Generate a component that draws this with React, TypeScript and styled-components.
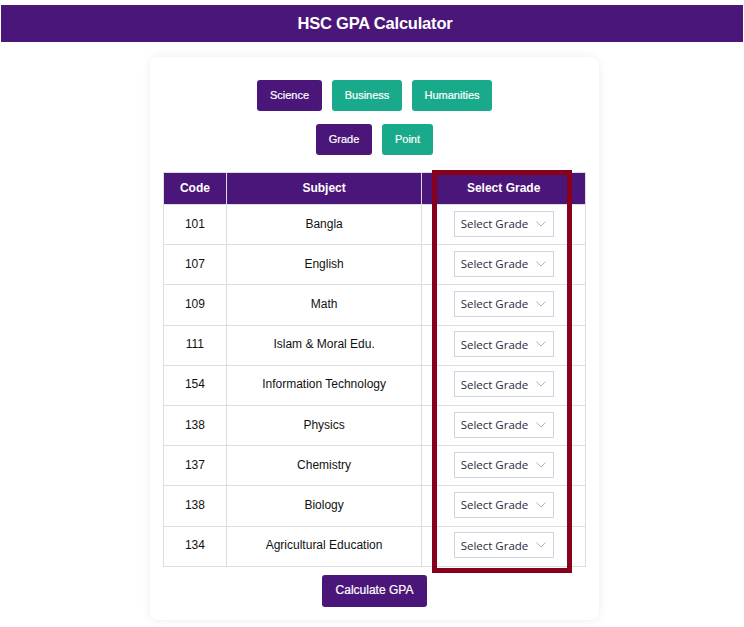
import React from "react";
import styled, { createGlobalStyle } from "styled-components";

const purple = "#4a1679";
const teal = "#19aa8c";

const Global = createGlobalStyle`
  html, body { margin: 0; padding: 0; background: #fff; }
  body { font-family: "Liberation Sans", Arial, sans-serif; color: #111; }
  * { box-sizing: border-box; }
`;

const Page = styled.div`
  padding: 5px 1px 7px;
`;

const TopBar = styled.header`
  height: 37px;
  background: ${purple};
  color: #fff;
  display: flex;
  align-items: center;
  justify-content: center;
  font-size: 16.5px;
  font-weight: 700;
  letter-spacing: -0.2px;
  padding-left: 6px;
`;

const Card = styled.main`
  width: 449px;
  margin: 15px 0 0 149px;
  background: #fff;
  border-radius: 8px;
  box-shadow: 0 0 10px rgba(0, 0, 0, 0.08);
  padding: 23px 13px 13px;
  display: flex;
  flex-direction: column;
  align-items: center;
`;

const ButtonRow = styled.div<{ $mb: number }>`
  display: flex;
  justify-content: center;
  gap: 10px;
  margin-bottom: ${(p) => p.$mb}px;
`;

const Tab = styled.button<{ $active?: boolean; $w: number }>`
  width: ${(p) => p.$w}px;
  height: 31px;
  border: none;
  border-radius: 3px;
  background: ${(p) => (p.$active ? purple : teal)};
  color: #fff;
  font-family: "Liberation Sans", Arial, sans-serif;
  font-size: 11px;
  font-weight: 400;
  -webkit-text-stroke: 0.2px #fff;
  padding: 0 0 2px;
  cursor: pointer;
`;

const TableWrap = styled.div`
  position: relative;
  width: 423px;
`;

const Table = styled.table`
  width: 423px;
  border-collapse: collapse;
  font-size: 12px;
`;

const Th = styled.th<{ $w: number }>`
  width: ${(p) => p.$w}px;
  height: 32px;
  background: ${purple};
  color: #fff;
  font-weight: 700;
  border: 1px solid #ddd;
  padding: 0 0 1px;
`;

const Td = styled.td`
  height: 40.2px;
  text-align: center;
  border: 1px solid #ddd;
  padding: 0 0 2px;
  color: #111;
`;

const SelectBox = styled.div`
  display: inline-flex;
  align-items: center;
  justify-content: space-between;
  width: 100px;
  height: 26px;
  border: 1px solid #cbd6e2;
  background: #fff;
  padding: 0 7px 0 6px;
  font-family: "Open Sans", "Noto Sans", sans-serif;
  font-size: 11.5px;
  color: #2a2a40;
  vertical-align: middle;
`;

const Highlight = styled.div`
  position: absolute;
  left: 269px;
  top: -2px;
  width: 140px;
  height: 403px;
  border: 5px solid #87001c;
  pointer-events: none;
`;

const Calc = styled.button`
  margin-top: 8px;
  width: 105px;
  height: 32px;
  border: none;
  border-radius: 3px;
  background: ${purple};
  color: #fff;
  font-family: "Liberation Sans", Arial, sans-serif;
  font-size: 12px;
  -webkit-text-stroke: 0.2px #fff;
  padding: 0 0 2px;
  cursor: pointer;
`;

const Chevron = () => (
  <svg width="10" height="6" viewBox="0 0 10 6" fill="none">
    <path d="M0.5 0.5 L5 5 L9.5 0.5" stroke="#b5b5b5" strokeWidth="1" />
  </svg>
);

const subjects: [string, string][] = [
  ["101", "Bangla"],
  ["107", "English"],
  ["109", "Math"],
  ["111", "Islam & Moral Edu."],
  ["154", "Information Technology"],
  ["138", "Physics"],
  ["137", "Chemistry"],
  ["138", "Biology"],
  ["134", "Agricultural Education"],
];

export default function App() {
  return (
    <>
      <Global />
      <Page>
        <TopBar>HSC GPA Calculator</TopBar>
        <Card>
          <ButtonRow $mb={13}>
            <Tab $active $w={65}>Science</Tab>
            <Tab $w={70}>Business</Tab>
            <Tab $w={80}>Humanities</Tab>
          </ButtonRow>
          <ButtonRow $mb={17}>
            <Tab $active $w={56}>Grade</Tab>
            <Tab $w={51}>Point</Tab>
          </ButtonRow>
          <TableWrap>
            <Table>
              <thead>
                <tr>
                  <Th $w={63}>Code</Th>
                  <Th $w={196}>Subject</Th>
                  <Th $w={164}>Select Grade</Th>
                </tr>
              </thead>
              <tbody>
                {subjects.map(([code, name], i) => (
                  <tr key={i}>
                    <Td>{code}</Td>
                    <Td>{name}</Td>
                    <Td>
                      <SelectBox>
                        <span>Select Grade</span>
                        <Chevron />
                      </SelectBox>
                    </Td>
                  </tr>
                ))}
              </tbody>
            </Table>
            <Highlight />
          </TableWrap>
          <Calc>Calculate GPA</Calc>
        </Card>
      </Page>
    </>
  );
}
